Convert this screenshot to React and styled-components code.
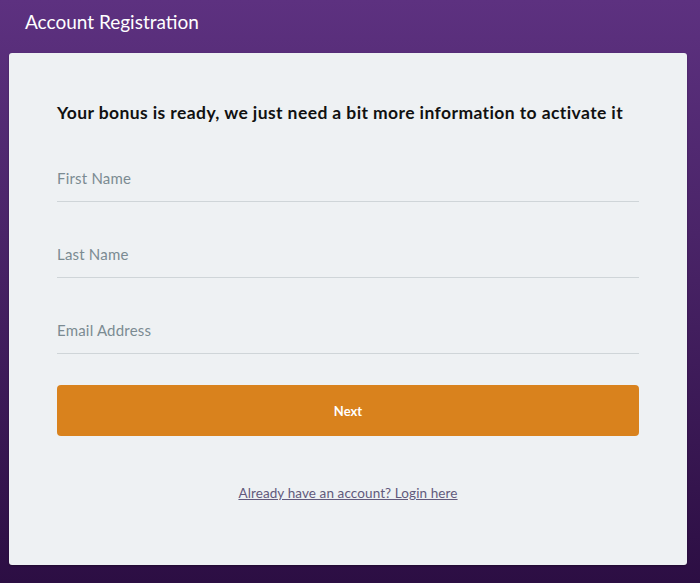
import React from 'react'
import styled, { createGlobalStyle } from 'styled-components'

const GlobalStyle = createGlobalStyle`
    html, body {
        margin: 0;
        padding: 0;
        height: 100%;
    }
    body {
        background: linear-gradient(180deg, #5d3180 0%, #4a2468 40%, #2c0e43 100%);
        font-family: 'Lato', 'Open Sans', sans-serif;
        min-height: 583px;
    }
`

const fields = [
    { name: 'firstName', placeholder: 'First Name', type: 'text' },
    { name: 'lastName', placeholder: 'Last Name', type: 'text' },
    { name: 'email', placeholder: 'Email Address', type: 'email' },
]

const App = () => (
    <Page>
        <GlobalStyle />
        <Header>Account Registration</Header>
        <Card>
            <Heading>
                Your bonus is ready, we just need a bit more information to
                activate it
            </Heading>
            <Form onSubmit={e => e.preventDefault()}>
                {fields.map(field => (
                    <Input
                        key={field.name}
                        name={field.name}
                        type={field.type}
                        placeholder={field.placeholder}
                    />
                ))}
                <Button type="submit">Next</Button>
            </Form>
            <LoginLink href="#">Already have an account? Login here</LoginLink>
        </Card>
    </Page>
)

const Page = styled.div`
    width: 700px;
    height: 583px;
    display: flex;
    flex-direction: column;
    box-sizing: border-box;
    padding: 10px 13px 0 9px;
`

const Header = styled.h1`
    margin: 0 0 20px 16px;
    font-size: 19px;
    line-height: 23px;
    font-weight: 400;
    color: #fff;
`

const Card = styled.div`
    box-sizing: border-box;
    height: 512px;
    background: #eef1f3;
    border-radius: 3px;
    box-shadow: 0 1px 2px rgba(0, 0, 0, 0.3);
    padding: 49px 48px 0;
    display: flex;
    flex-direction: column;
`

const Heading = styled.h2`
    margin: 0 0 31px;
    font-size: 17.5px;
    line-height: 22px;
    font-weight: 700;
    letter-spacing: 0.4px;
    color: #111;
    white-space: nowrap;
`

const Form = styled.form`
    display: flex;
    flex-direction: column;
    gap: 29px;
`

const Input = styled.input`
    height: 47px;
    box-sizing: border-box;
    border: none;
    border-bottom: 1px solid #cfd5d8;
    background: transparent;
    padding: 0;
    font-family: inherit;
    font-size: 15px;
    letter-spacing: 0.2px;
    color: #333;
    outline: none;
    &::placeholder {
        color: #7b8b92;
    }
`

const Button = styled.button`
    margin-top: 2px;
    height: 51px;
    border: none;
    border-radius: 4px;
    background: #d9821d;
    color: #fff;
    font-family: inherit;
    font-size: 13px;
    font-weight: 700;
    cursor: pointer;
`

const LoginLink = styled.a`
    align-self: center;
    margin-top: 48px;
    font-size: 13.5px;
    line-height: 18px;
    letter-spacing: 0.1px;
    color: #625a7c;
    text-decoration: underline;
`

export default App
